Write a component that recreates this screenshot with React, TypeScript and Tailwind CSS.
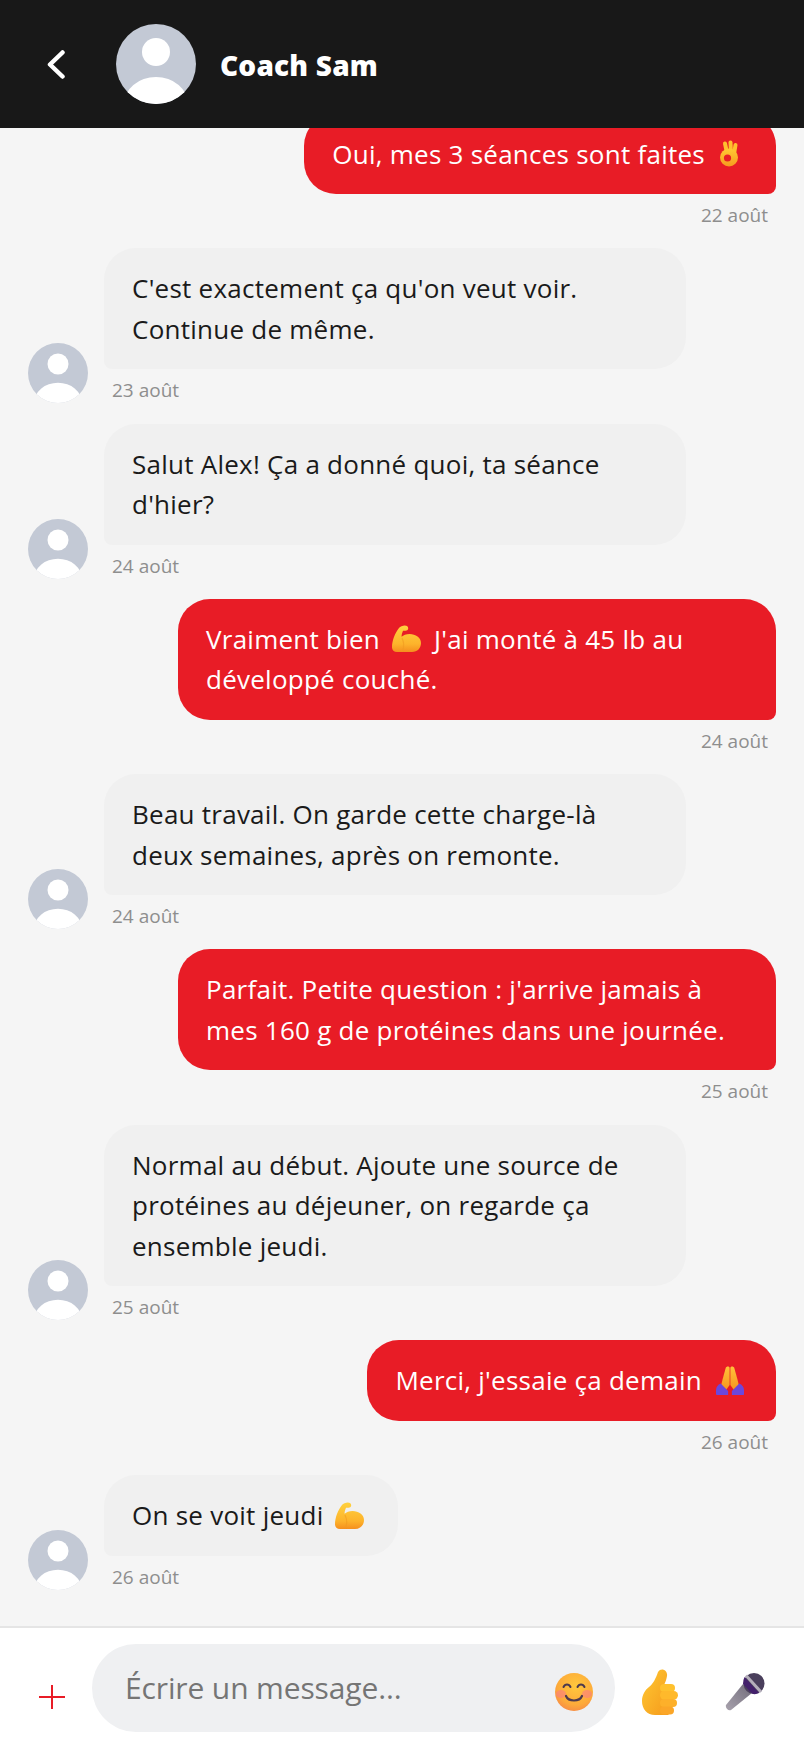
import { Fragment, type ReactNode } from "react";

type Message = {
  from: "me" | "coach";
  lines: ReactNode[];
  date: string;
};

function OkHand() {
  return (
    <svg viewBox="0 0 18 27" className="inline-block w-[18px] h-[27px] ml-2 mr-[10px] align-[-3px]">
      <defs>
        <linearGradient id="okGrad" x1="0" y1="0" x2="0" y2="1">
          <stop offset="0" stopColor="#ffc933" />
          <stop offset="1" stopColor="#f79a1f" />
        </linearGradient>
      </defs>
      <g stroke="#ffbf2e" strokeWidth="4" strokeLinecap="round">
        <path d="M7 13L5 3.500" />
        <path d="M11 13l-.5-10.500" />
        <path d="M14 14l1.500-9" />
      </g>
      <circle cx="9" cy="17.500" r="9" fill="url(#okGrad)" />
      <circle cx="7.500" cy="18" r="3.600" fill="#e81c26" />
    </svg>
  );
}

function Muscle({ id }: { id: string }) {
  return (
    <svg viewBox="0 0 29 27" className="inline-block w-[29px] h-[27px] ml-[5px] mr-[6px] align-[-3.500px]">
      <defs>
        <linearGradient id={id} x1="0" y1="0" x2="0" y2="1">
          <stop offset="0" stopColor="#ffd23f" />
          <stop offset="0.7" stopColor="#fdb32b" />
          <stop offset="1" stopColor="#f58f1e" />
        </linearGradient>
      </defs>
      <path
        d="M7 3c1.500-2 6-3.500 8-2 1.800 1.300 1.500 3.800-.5 4.500-1.500.6-2.500.3-3.500.2-.8 2-1.500 4-1.400 6 1.800-1.500 4.500-2.700 8-2.700 6 0 11.400 3.500 11.400 9 0 5-3.500 9-9 9H5c-3 0-5-1.800-5-4.500C0 15.500 3 8 7 3z"
        fill={`url(#${id})`}
      />
      <path d="M10 13c2 4 2.500 8 .5 13" stroke="#f09a1f" strokeWidth="1.200" fill="none" opacity="0.6" />
    </svg>
  );
}

function Pray() {
  return (
    <svg viewBox="0 0 30 30" preserveAspectRatio="none" className="inline-block w-7 h-[30px] ml-[7px] mr-1 align-[-5px]">
      <defs>
        <linearGradient id="prayGrad" x1="0" y1="0" x2="0" y2="1">
          <stop offset="0" stopColor="#ffc23a" />
          <stop offset="1" stopColor="#f7931e" />
        </linearGradient>
      </defs>
      <path d="M14.600 20V3c0-2-3.600-2-4.200 0L7 14.500 5 22l5 4 4.600-6z" fill="url(#prayGrad)" />
      <path d="M15.400 20V3c0-2 3.600-2 4.200 0L23 14.500 25 22l-5 4-4.600-6z" fill="url(#prayGrad)" />
      <path d="M5 18.500l8 7.500v4H1c-.6 0-1-.4-1-1v-4c0-3 2.500-5.500 5-6.500z" fill="#6b47dc" />
      <path d="M25 18.500l-8 7.500v4h12c.6 0 1-.4 1-1v-4c0-3-2.500-5.500-5-6.500z" fill="#6b47dc" />
    </svg>
  );
}

function Smile() {
  return (
    <svg viewBox="0 0 38 38" className="w-[38px] h-[38px] mt-2 shrink-0">
      <defs>
        <radialGradient id="smileGrad" cx="0.55" cy="0.35" r="0.75">
          <stop offset="0" stopColor="#ffc83d" />
          <stop offset="0.65" stopColor="#fdaa3a" />
          <stop offset="1" stopColor="#f5814a" />
        </radialGradient>
      </defs>
      <circle cx="19" cy="19" r="19" fill="url(#smileGrad)" />
      <ellipse cx="6" cy="21" rx="5" ry="4" fill="#f9788a" opacity="0.55" />
      <ellipse cx="32" cy="21" rx="5" ry="4" fill="#f9788a" opacity="0.55" />
      <path d="M8.500 14c1.500-3.200 5.500-3.200 7 0M22.500 14c1.500-3.200 5.500-3.200 7 0" stroke="#4e3a4e" strokeWidth="2" fill="none" strokeLinecap="round" />
      <path d="M11 23c2.500 6 13.500 6 16 0" stroke="#4e3a4e" strokeWidth="2.200" fill="none" strokeLinecap="round" />
    </svg>
  );
}

function ThumbUp() {
  return (
    <svg viewBox="0 0 36 46" className="w-9 h-[46px]">
      <defs>
        <linearGradient id="thumbGrad" x1="0" y1="0" x2="1" y2="1">
          <stop offset="0" stopColor="#ffc933" />
          <stop offset="1" stopColor="#f59a1c" />
        </linearGradient>
      </defs>
      <path
        d="M16 3c3-5 10-2 9 4-.5 3-1.500 6-2.500 8h4V46H13C5 46 0 40 0 32c0-6 3-11 7-14 4-3 7-9 9-15z"
        fill="url(#thumbGrad)"
      />
      <rect x="18" y="15" width="15" height="8" rx="4" fill="#ffc12e" />
      <rect x="18" y="22" width="18" height="8.500" rx="4.200" fill="#ffb92b" />
      <rect x="18" y="30" width="17" height="8" rx="4" fill="#fdb02a" />
      <rect x="18" y="37.500" width="14" height="8" rx="4" fill="#fba628" />
    </svg>
  );
}

function Mic() {
  return (
    <svg viewBox="0 0 40 38" className="w-10 h-[38px]">
      <defs>
        <linearGradient id="micGrad" x1="0" y1="1" x2="1" y2="0">
          <stop offset="0" stopColor="#a8a2ad" />
          <stop offset="1" stopColor="#716c7a" />
        </linearGradient>
      </defs>
      <path d="M18 11l9 9L6 37c-2.500 1.500-6-2-5-5z" fill="url(#micGrad)" />
      <circle cx="29" cy="10.500" r="10.500" fill="#4a3f5c" />
      <path d="M19.500 4L34 20q-4 2-7 .5L18 11q0-4 1.500-7z" fill="#43206b" />
      <path d="M21 2.500L36 19" stroke="#b5afbb" strokeWidth="3" />
    </svg>
  );
}

function Avatar({ size }: { size: "lg" | "sm" }) {
  return (
    <div className={size === "lg" ? "w-20 h-20 shrink-0" : "w-[60px] h-[60px] shrink-0"}>
      <svg viewBox="0 0 80 80" className="w-full h-full">
        <clipPath id={`avatarClip-${size}`}>
          <circle cx="40" cy="40" r="40" />
        </clipPath>
        <g clipPath={`url(#avatarClip-${size})`}>
          <rect width="80" height="80" fill="#c3c9d5" />
          <circle cx="40" cy="28" r="14" fill="#fff" />
          <ellipse cx="40" cy="80" rx="32" ry="27" fill="#fff" />
        </g>
      </svg>
    </div>
  );
}

const messages: Message[] = [
  { from: "me", lines: [<>Oui, mes 3 séances sont faites <OkHand /></>], date: "22 août" },
  { from: "coach", lines: ["C'est exactement ça qu'on veut voir.", "Continue de même."], date: "23 août" },
  { from: "coach", lines: ["Salut Alex! Ça a donné quoi, ta séance", "d'hier?"], date: "24 août" },
  { from: "me", lines: [<>Vraiment bien <Muscle id="muscleA" /> J'ai monté à 45 lb au</>, "développé couché."], date: "24 août" },
  { from: "coach", lines: ["Beau travail. On garde cette charge-là", "deux semaines, après on remonte."], date: "24 août" },
  { from: "me", lines: ["Parfait. Petite question : j'arrive jamais à", "mes 160 g de protéines dans une journée."], date: "25 août" },
  { from: "coach", lines: ["Normal au début. Ajoute une source de", "protéines au déjeuner, on regarde ça", "ensemble jeudi."], date: "25 août" },
  { from: "me", lines: [<>Merci, j'essaie ça demain <Pray /></>], date: "26 août" },
  { from: "coach", lines: [<>On se voit jeudi <Muscle id="muscleB" /></>], date: "26 août" },
];

function Bubble({ message }: { message: Message }) {
  const mine = message.from === "me";
  const wrapped = message.lines.length > 1;
  return (
    <div className={mine ? "flex flex-col items-end" : "flex flex-col items-start"}>
      <div
        className={
          mine
            ? `px-7 py-5 bg-[#e81c26] text-white rounded-[32px] rounded-br-lg whitespace-nowrap ${wrapped ? "w-[598px]" : ""}`
            : `px-7 py-5 bg-[#f0f0f0] text-[#1a1a1a] rounded-[32px] rounded-bl-lg whitespace-nowrap ${wrapped ? "w-[582px]" : ""}`
        }
      >
        {message.lines.map((line, i) => (
          <Fragment key={i}>
            {i > 0 && <br />}
            {line}
          </Fragment>
        ))}
      </div>
      <div className="mt-[9px] mx-2 h-[25px] text-[19px] leading-[25px] tracking-normal text-[#8e8e8e]">{message.date}</div>
    </div>
  );
}

export default function App() {
  return (
    <div className="flex flex-col h-[1748px] bg-[#f5f5f5] font-['Open_Sans',sans-serif] text-[26px] leading-[40.5px] tracking-[0.25px]">
      {/* Header */}
      <header className="h-32 shrink-0 relative z-10 flex items-center bg-[#181818]">
        <svg viewBox="0 0 18 29" className="ml-[47px] w-[18px] h-[29px]" fill="none" stroke="#fff" strokeWidth="4.500" strokeLinecap="round" strokeLinejoin="round">
          <path d="M15.500 2.500L3 14.500l12.500 12" />
        </svg>
        <div className="ml-[51px]">
          <Avatar size="lg" />
        </div>
        <h1 className="ml-6 mt-0.5 text-white text-[28px] font-extrabold tracking-[0.2px]">Coach Sam</h1>
      </header>

      {/* Messages */}
      <main className="flex-1 overflow-hidden">
        <div className="-mt-[14.5px] px-7 flex flex-col gap-[20.25px]">
          {messages.map((message, i) =>
            message.from === "me" ? (
              <Bubble key={i} message={message} />
            ) : (
              <div key={i} className="flex items-end gap-4">
                <Avatar size="sm" />
                <Bubble message={message} />
              </div>
            ),
          )}
        </div>
      </main>

      {/* Composer */}
      <footer className="h-[122px] shrink-0 flex items-center border-t-2 border-[#e5e5e5] bg-white pl-[39px]">
        <svg viewBox="0 0 26 24" className="w-[26px] h-6 mt-[18px] shrink-0" stroke="#e81c26" strokeWidth="2">
          <path d="M0 12h26M13 0v24" />
        </svg>
        <div className="ml-[27px] w-[523px] h-[88px] rounded-[44px] bg-[#eff0f2] flex items-center pl-[33px] pr-[22px]">
          <input
            placeholder="Écrire un message..."
            className="flex-1 min-w-0 bg-transparent outline-none text-[30px] tracking-[-0.13px] placeholder:text-[#757575]"
          />
          <Smile />
        </div>
        <div className="ml-[27px] mt-2">
          <ThumbUp />
        </div>
        <div className="ml-[47px] mt-2">
          <Mic />
        </div>
      </footer>
    </div>
  );
}
